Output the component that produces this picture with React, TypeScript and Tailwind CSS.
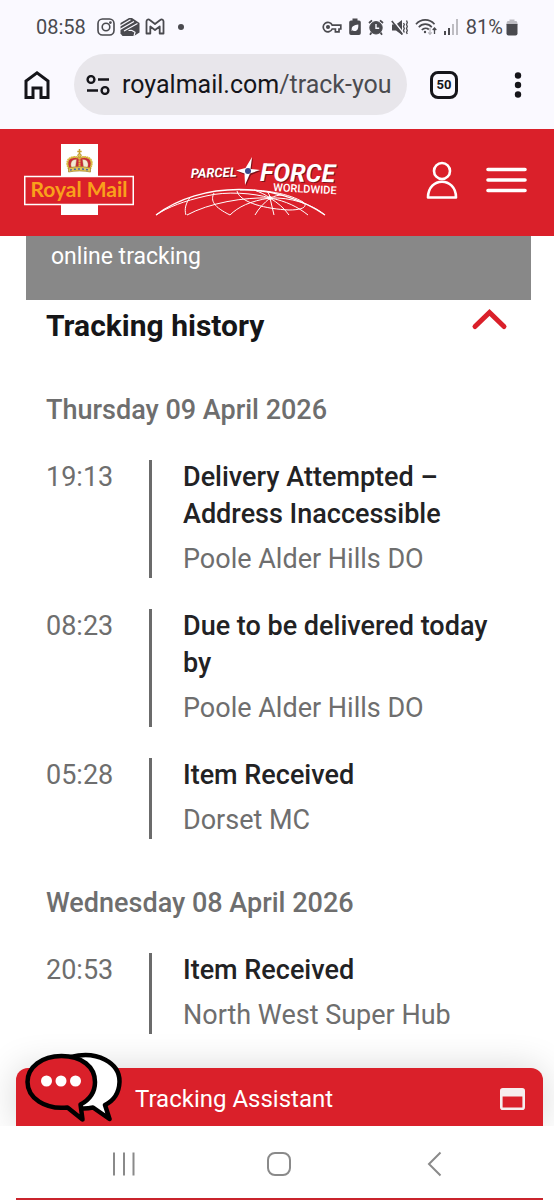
type TrackingEvent = {
  time: string;
  title: string;
  place: string;
};

type TrackingDay = {
  date: string;
  events: TrackingEvent[];
};

const days: TrackingDay[] = [
  {
    date: "Thursday 09 April 2026",
    events: [
      { time: "19:13", title: "Delivery Attempted – Address Inaccessible", place: "Poole Alder Hills DO" },
      { time: "08:23", title: "Due to be delivered today by", place: "Poole Alder Hills DO" },
      { time: "05:28", title: "Item Received", place: "Dorset MC" },
    ],
  },
  {
    date: "Wednesday 08 April 2026",
    events: [{ time: "20:53", title: "Item Received", place: "North West Super Hub" }],
  },
];

function StatusBar() {
  return (
    <div className="flex h-[54px] items-center justify-between pl-9 pr-9 text-xl text-[#4a4a4f]">
      <div className="flex items-center gap-[5px]">
        <span className="mr-[6px]">08:58</span>
        {/* Instagram */}
        <svg width="18" height="18" viewBox="0 0 18 18" fill="none" stroke="currentColor" strokeWidth="1.6">
          <rect x="1" y="1" width="16" height="16" rx="4.5" />
          <circle cx="9" cy="9" r="3.8" />
          <circle cx="13.4" cy="4.6" r="0.6" fill="currentColor" />
        </svg>
        {/* Hand */}
        <svg width="20" height="20" viewBox="0 0 20 20" fill="currentColor">
          <path d="M0.5 6 9 1 12 1 19.500 6v9.500L14 19H2.500L0.500 16.500Z" />
          <path
            d="M0 9 10.500 2.800M0 12.500 14 4.500M4 14 17.500 6.500M11.500 13.300l3.500 2-1 3.700M8.500 13.500 11.500 13.300"
            fill="none"
            stroke="#faf9ff"
            strokeWidth="1.200"
          />
        </svg>
        {/* Gmail */}
        <svg width="20" height="18" viewBox="0 0 20 18" fill="none" stroke="currentColor" strokeWidth="1.800" strokeLinejoin="round">
          <path d="M1.500 3.200C1.500 1.400 3.600 1 4.800 2L10 6l5.200-4c1.200-1 3.300-.6 3.300 1.200V15.500h-3.800V8.500L10 12 5.300 8.500v7H1.500Z" />
        </svg>
        <span className="ml-2 size-[6px] rounded-full bg-[#4a4a4f]" />
      </div>
      <div className="flex items-center gap-[7px]">
        {/* VPN key */}
        <svg width="20" height="14" viewBox="0 0 20 14" fill="none" stroke="currentColor" strokeWidth="1.700">
          <path d="M10.200 5.200H18.800V9H17v2.800h-3.600V9h-3.200A4.700 4.700 0 1 1 10.200 5.200Z" />
          <circle cx="6" cy="7" r="1.200" fill="currentColor" />
        </svg>
        {/* Power saving */}
        <svg width="12" height="18" viewBox="0 0 12 18" fill="currentColor">
          <path d="M3.500 0.500h5v2H10a1.800 1.800 0 0 1 1.800 1.800v11A1.800 1.800 0 0 1 10 17H2A1.800 1.800 0 0 1 .2 15.300v-11A1.800 1.800 0 0 1 2 2.500h1.500Z" />
          <path d="M9.300 6.500c.3 4-.8 6.700-3.800 6.500-1 0-1.500-.3-2-.7l-1 1 .2-2.300c0-3 2.500-3.700 6.600-4.500Z" fill="#faf9ff" />
        </svg>
        {/* Alarm */}
        <svg width="16" height="17" viewBox="0 0 16 17" fill="none" stroke="currentColor">
          <circle cx="8" cy="8.800" r="6.200" fill="currentColor" />
          <path d="M1 4 4 1.300M15 4l-3-2.700M3.500 13.500 2 15.800M12.500 13.500l1.500 2.300" strokeWidth="1.800" />
          <path d="M8 5v4.300h3.200" stroke="#faf9ff" strokeWidth="1.400" />
        </svg>
        {/* Vibrate, muted */}
        <svg width="17" height="17" viewBox="0 0 17 17" fill="none" stroke="currentColor">
          <path d="M1 5.500h4L11 1v15l-6-4.500H1Z" fill="currentColor" stroke="none" />
          <path d="M2 1l11 14" stroke="#faf9ff" strokeWidth="1.500" />
          <path d="M.8 2 11.500 15.500" strokeWidth="1.600" />
          <path d="m12.500 4 .8 1.500-.8 2 .8 2-.8 2 .8 2M15.500 1.500l.8 2-.8 2 .8 2-.8 2 .8 2-.8 2 .8 1.500" strokeWidth="1.300" />
        </svg>
        {/* Wi-Fi */}
        <svg width="22" height="18" viewBox="0 0 22 18" fill="none" stroke="currentColor" strokeWidth="1.700">
          <path d="M1 6.200C6 .5 14.500.5 19.500 6.200M3.800 9.200c3.600-4 9.400-4 13 0M6.800 12c2-2 5-2.300 7-.5" />
          <circle cx="10" cy="14" r="1.200" fill="currentColor" stroke="none" />
          <path d="M15 10v6M13.200 14.300 15 16.300l1.800-2" strokeWidth="1.200" opacity="0.4" />
          <path d="M19.500 16v-5.500M17.700 12l1.800-2 1.800 2" strokeWidth="1.300" />
        </svg>
        {/* Mobile signal */}
        <svg width="15" height="16" viewBox="0 0 15 16" fill="currentColor">
          <rect x="0" y="12" width="2" height="4" />
          <rect x="4" y="9" width="2" height="7" />
          <rect x="8" y="5" width="2" height="11" opacity="0.35" />
          <rect x="12" y="0" width="2" height="16" opacity="0.35" />
        </svg>
        <span className="flex items-center gap-[3px]">
          81%
          <svg width="12" height="17" viewBox="0 0 12 17" fill="currentColor">
            <path d="M3.500 0.500h5v1.500h2L11.500 4v2H.5V4l1-2h2Z" opacity="0.35" />
            <path d="M.5 5h11v9.500a2 2 0 0 1-2 2h-7a2 2 0 0 1-2-2Z" />
          </svg>
        </span>
      </div>
    </div>
  );
}

function BrowserBar() {
  return (
    <div className="flex items-center pb-[14px] pl-6 pr-8 text-[#15151a]">
      <button type="button" aria-label="Home" className="mr-6">
        <svg width="26" height="30" viewBox="0 0 26 30" fill="none" stroke="currentColor" strokeWidth="3">
          <path d="M2 27.500V11L13 2.800 24 11v16.500h-7V18H9v9.500Z" />
        </svg>
      </button>
      <button
        type="button"
        aria-label="Address bar"
        className="flex h-[61px] min-w-0 flex-1 items-center gap-3 overflow-hidden rounded-full bg-[#e8e6eb] px-3 text-[25px]"
      >
        <svg className="shrink-0" width="24" height="20" viewBox="0 0 24 20" fill="none" stroke="currentColor" strokeWidth="2.400">
          <circle cx="5" cy="4.500" r="3.400" />
          <path d="M12 4.500h11M1 15.500h11" />
          <circle cx="19" cy="15.500" r="3.400" />
        </svg>
        <span className="whitespace-nowrap">
          royalmail.com<span className="text-[#4b4b50]">/track-you</span>
        </span>
      </button>
      <button
        type="button"
        aria-label="Tabs"
        className="ml-[23px] flex size-7 items-center justify-center rounded-lg border-[3px] border-[#15151a] text-[13px] font-bold"
      >
        50
      </button>
      <button type="button" aria-label="More options" className="ml-14">
        <svg width="8" height="28" viewBox="0 0 8 28" fill="currentColor">
          <circle cx="4" cy="4.500" r="3.200" />
          <circle cx="4" cy="14" r="3.200" />
          <circle cx="4" cy="23.500" r="3.200" />
        </svg>
      </button>
    </div>
  );
}

function RoyalMailLogo() {
  return (
    <svg width="110" height="72" viewBox="0 0 110 72">
      <rect x="37" y="0" width="37" height="71" fill="#fff" />
      {/* Crown */}
      <g stroke="#a98a35" strokeWidth="0.800">
        <path d="M45 25C41 16 47 11 55.500 14 64 11 70 16 66 25Z" fill="#c8283a" />
        <path d="M47.500 23.500c-2-5 1-8.500 5-8l-1 8ZM63.500 23.500c2-5-1-8.500-5-8l1 8Z" fill="#f3e9d6" strokeWidth="0.400" />
        <path d="M45 25C40 15.500 47 11 55.500 14 64 11 71 15.500 66 25M55.500 14v11" fill="none" stroke="#dcb83c" strokeWidth="2" strokeDasharray="1.800 0.400" />
        <path d="M55.500 5v7M53.300 7.500h4.400" stroke="#c9a12e" strokeWidth="1.500" />
        <circle cx="55.500" cy="11.500" r="1.800" fill="#e3c656" />
        <path d="M44.500 24c7-1.700 15-1.700 22 0v4c-7-1.500-15-1.500-22 0Z" fill="#e3c656" />
        <path d="M46 26c6-1.300 13-1.300 19 0" fill="none" stroke="#4267a8" strokeWidth="1.500" strokeDasharray="2 2" />
      </g>
      <rect x="0.750" y="32.500" width="108.500" height="28" fill="#da202a" stroke="#fff" strokeWidth="1.500" />
      <text x="55" y="53" textAnchor="middle" fill="#f9a01b" fontFamily="Lato, sans-serif" fontSize="21" fontWeight="700">
        Royal Mail
      </text>
    </svg>
  );
}

function ParcelforceLogo() {
  return (
    <svg width="188" height="61" viewBox="0 0 188 61">
      <g fontStyle="italic" fontWeight="700">
        <g fill="#7d1018">
          <text x="38" y="24" fontSize="13" transform="rotate(-2 38 24)">PARCEL</text>
          <text x="107" y="27" fontSize="25" transform="rotate(1 107 27)">FORCE</text>
        </g>
        <g fill="#fff">
          <text x="37" y="23" fontSize="13" transform="rotate(-2 37 23)">PARCEL</text>
          <text x="106" y="26" fontSize="25" transform="rotate(1 106 26)">FORCE</text>
        </g>
      </g>
      <text x="119" y="36" fill="#fff" fontSize="11" fontWeight="500" transform="rotate(3 119 36)">
        WORLDWIDE
      </text>
      {/* Compass star */}
      <path d="M99 3 97.500 15.500 107 16 97 20 92 31 91.500 20 83 16.500 92.500 14Z" fill="#7d1018" />
      <path d="M98 2 96.500 14 106 15 96 18.500 91 30 90.500 18.500 82 15.500 91.500 13Z" fill="#fff" />
      <circle cx="94" cy="16" r="3" fill="#3a4a8f" />
      {/* Globe */}
      <g fill="none" stroke="#fff" strokeWidth="1">
        <path d="M2 60C47 26 122 26 171 60" strokeWidth="1.300" />
        <path d="M32 60C30 54 32 48 36 42.500M76 60C60 52 56 46 60 38M83 36c3 12 30 18 52 19 15 0 19-4 14-8C136 39 110 34 86 35" />
        <path d="M116 43C100 38 72 36 52 41 30 46 14 52 2 60M116 43C90 42 55 48 33 60M116 43C96 46 84 52 76 60M116 43c-6 5-11 10-15 17M116 43l4 17M116 43c8 5 14 10 19 17M116 43c16 3 28 9 38 17M116 43c20-1 42 6 55 17M116 43c-4-3-10-6-16-8M116 43c0-2-1-4-3-7M116 43c5-2 8-3 12-3" />
      </g>
      <circle cx="116" cy="43" r="2" fill="#fff" />
    </svg>
  );
}

function SiteHeader() {
  return (
    <header className="flex h-[107px] items-center justify-between bg-[#da202a] pb-[5px] pl-6 pr-[27px]">
      <div className="flex items-end gap-5">
        <a href="#" aria-label="Royal Mail">
          <RoyalMailLogo />
        </a>
        <a href="#" aria-label="Parcelforce Worldwide">
          <ParcelforceLogo />
        </a>
      </div>
      <div className="flex items-center gap-7 text-white">
        <button type="button" aria-label="Account">
          <svg width="32" height="38" viewBox="0 0 32 38" fill="none" stroke="currentColor" strokeWidth="2.600" strokeLinejoin="round">
            <circle cx="16" cy="10" r="8" />
            <path d="M2 36.500C2 15.500 30 15.500 30 36.500Z" />
          </svg>
        </button>
        <button type="button" aria-label="Menu">
          <svg width="41" height="26" viewBox="0 0 41 26" stroke="currentColor" strokeWidth="3.600" strokeLinecap="round">
            <path d="M2 2.500h37M2 13h37M2 23.500h37" />
          </svg>
        </button>
      </div>
    </header>
  );
}

function EventRow({ event }: { event: TrackingEvent }) {
  return (
    <li className="flex text-[27px] leading-[37px]">
      <time className="w-[103px] shrink-0 text-[#6e6e6e]">{event.time}</time>
      <span className="mt-px w-[3px] shrink-0 bg-[#6b6b6b]" />
      <div className="min-w-0 pl-[31px]">
        <h4 className="font-medium text-[#222224]">{event.title}</h4>
        <p className="mt-2 text-[#6e6e6e]">{event.place}</p>
      </div>
    </li>
  );
}

function TrackingHistory() {
  return (
    <main className="flex-1 bg-white pb-[34px]">
      <div className="ml-[26px] mr-[23px] h-16 bg-[#888888] pl-[25px] pr-6 pt-1 text-[23px] leading-[34px] text-white">
        online tracking
      </div>
      <section className="px-[46px]">
        <div className="flex h-[50px] items-center justify-between">
          <h2 className="text-[30px] font-bold text-[#161618]">Tracking history</h2>
          <button type="button" aria-label="Collapse tracking history" aria-expanded="true" className="pb-3">
            <svg width="38" height="24" viewBox="0 0 38 24" fill="none" stroke="#da202a" strokeWidth="5" strokeLinecap="round">
              <path d="M5 19.500 19.500 5.500 34 19.500" />
            </svg>
          </button>
        </div>
        <div className="mt-[42px] flex flex-col gap-[46px]">
          {days.map((day) => (
            <div key={day.date}>
              <h3 className="text-[27px] font-medium leading-[37px] text-[#6e6e6e]">{day.date}</h3>
              <ul className="mt-[30px] flex flex-col gap-[30px]">
                {day.events.map((event) => (
                  <EventRow key={event.time} event={event} />
                ))}
              </ul>
            </div>
          ))}
        </div>
      </section>
    </main>
  );
}

function ChatBubbles() {
  return (
    <svg width="98" height="70" viewBox="0 0 98 70" stroke="#000" strokeWidth="4.500" strokeLinejoin="round">
      <path d="M46 5C72-2 95 11 94.500 30 94 42 88 49 80 53L84.500 67 68 55.500C60 57 50 56 44 54Z" fill="#fff" />
      <path d="M36.500 4C57 4 70 15 70 30 70 41 64 48 55.500 52.500L57.500 67.500 42.500 55.500C20 58 2.500 46 2.500 30 2.500 15 17 4 36.500 4Z" fill="#da202a" />
      <g fill="#fff" stroke="none">
        <circle cx="21.500" cy="29" r="5.500" />
        <circle cx="36" cy="29" r="5.500" />
        <circle cx="50.500" cy="29" r="5.500" />
      </g>
    </svg>
  );
}

function TrackingAssistant() {
  return (
    <div className="bg-white pl-4 pr-[11px]">
      <button
        type="button"
        className="relative flex h-[58px] w-full items-center justify-between rounded-t-xl bg-[#da202a] pl-[119px] pr-[18px] text-2xl text-white shadow-[0_0_36px_rgba(0,0,0,0.16)]"
      >
        <span className="absolute -top-4 left-[9px]">
          <ChatBubbles />
        </span>
        <span className="pt-1">Tracking Assistant</span>
        <svg className="mt-1" width="25" height="22" viewBox="0 0 25 22">
          <rect x="1.300" y="1.300" width="22.400" height="19.400" rx="1.500" fill="none" stroke="#f6eeee" strokeWidth="2.600" />
          <rect x="1" y="1" width="23" height="7.500" fill="#f6eeee" />
        </svg>
      </button>
    </div>
  );
}

function AndroidNav() {
  return (
    <nav className="relative bg-white">
      <div className="flex h-[72px] items-center justify-between px-28 pt-1 text-[#8a8a8a]">
        <button type="button" aria-label="Recent apps">
          <svg width="23" height="24" viewBox="0 0 23 24" stroke="currentColor" strokeWidth="2">
            <path d="M2 .5v23M12 .5v23M21.500 .5v23" />
          </svg>
        </button>
        <button type="button" aria-label="Home screen">
          <svg width="24" height="24" viewBox="0 0 24 24" fill="none" stroke="currentColor" strokeWidth="2">
            <rect x="1" y="1" width="22" height="22" rx="7" />
          </svg>
        </button>
        <button type="button" aria-label="Back">
          <svg width="20" height="26" viewBox="0 0 20 26" fill="none" stroke="currentColor" strokeWidth="2">
            <path d="M18.500 1.500 7 13l11.500 11.500" />
          </svg>
        </button>
      </div>
      <div className="ml-4 mr-[11px] h-[2px] bg-[#c9242c]" />
    </nav>
  );
}

export default function App() {
  return (
    <div className="flex min-h-screen flex-col bg-white font-['Roboto',sans-serif]">
      <div className="bg-[#faf9ff]">
        <StatusBar />
        <BrowserBar />
      </div>
      <SiteHeader />
      <TrackingHistory />
      <TrackingAssistant />
      <AndroidNav />
    </div>
  );
}
